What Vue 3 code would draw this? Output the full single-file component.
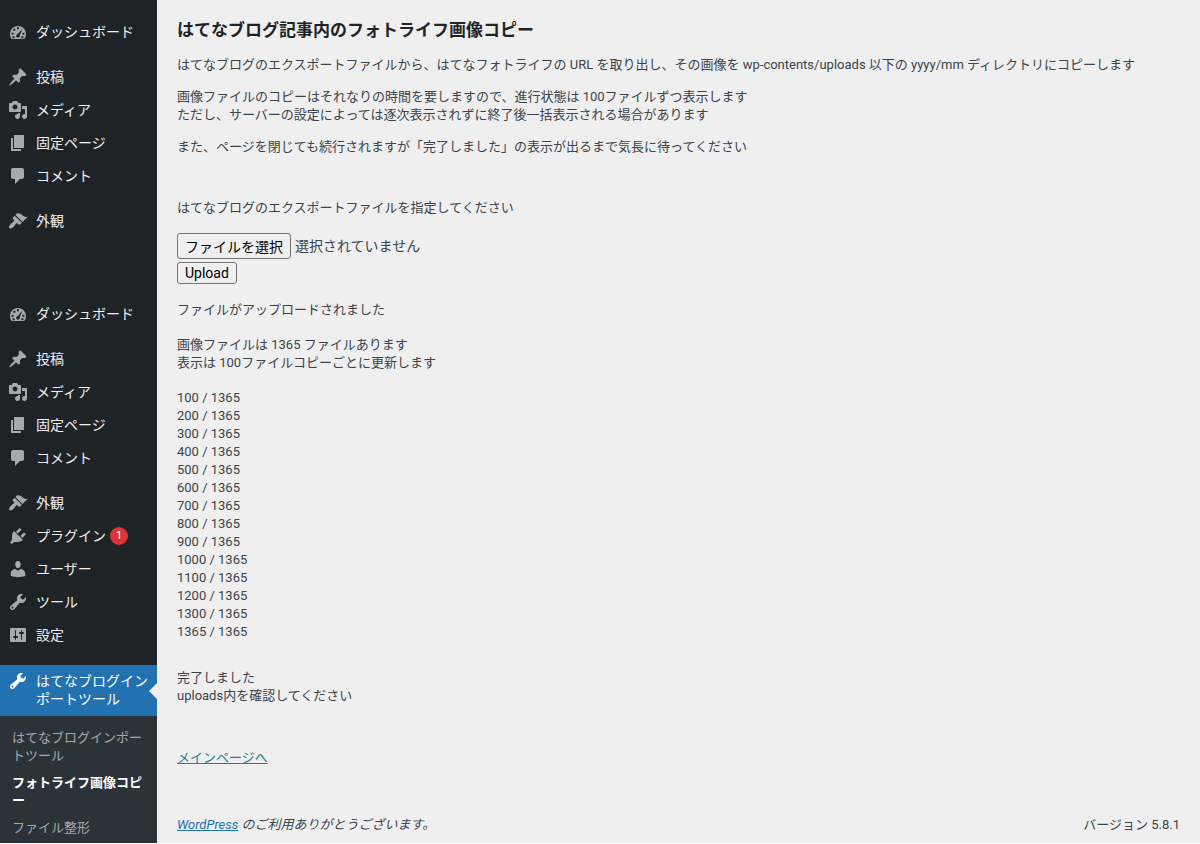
<template>
  <div class="admin">
    <aside class="sidebar">
      <nav
        v-for="(block, b) in menuBlocks"
        :key="b"
        class="menu-block"
        :aria-label="b === 0 ? 'メニュー' : '管理メニュー'"
      >
        <ul v-for="(group, g) in block" :key="g" class="menu-group">
          <li v-for="item in group" :key="item.label">
            <a href="#" class="menu-item">
              <svg class="icon" viewBox="0 0 20 20" aria-hidden="true">
                <path :d="icons[item.icon]" fill-rule="evenodd" />
              </svg>
              <span>{{ item.label }}</span>
              <span v-if="item.count" class="badge">{{ item.count }}</span>
            </a>
          </li>
        </ul>

        <!-- Current plugin -->
        <a v-if="b === 1" href="#" class="menu-item current">
          <svg class="icon" viewBox="0 0 20 20" aria-hidden="true">
            <path :d="icons.tools" fill-rule="evenodd" />
          </svg>
          <span>はてなブログインポートツール</span>
        </a>
      </nav>

      <ul class="submenu">
        <li v-for="sub in submenu" :key="sub">
          <a href="#" :class="{ selected: sub === page }">{{ sub }}</a>
        </li>
      </ul>
    </aside>

    <main class="content">
      <h1>はてなブログ記事内のフォトライフ画像コピー</h1>
      <p>はてなブログのエクスポートファイルから、はてなフォトライフの URL を取り出し、その画像を wp-contents/uploads 以下の yyyy/mm ディレクトリにコピーします</p>
      <p>
        画像ファイルのコピーはそれなりの時間を要しますので、進行状態は 100ファイルずつ表示します<br />
        ただし、サーバーの設定によっては逐次表示されずに終了後一括表示される場合があります
      </p>
      <p>また、ページを閉じても続行されますが「完了しました」の表示が出るまで気長に待ってください</p>

      <form class="upload" @submit.prevent>
        <p>はてなブログのエクスポートファイルを指定してください</p>
        <div class="file-row">
          <button type="button" class="file-button" @click="fileInput.click()">ファイルを選択</button>
          <label for="export-file">{{ fileName }}</label>
          <input id="export-file" ref="fileInput" type="file" hidden @change="handleFileChange" />
        </div>
        <button type="submit" class="submit-button">Upload</button>
      </form>

      <section class="progress">
        <p>ファイルがアップロードされました</p>
        <p>
          画像ファイルは {{ total }} ファイルあります<br />
          表示は 100ファイルコピーごとに更新します
        </p>
        <ul>
          <li v-for="n in steps" :key="n">{{ n }} / {{ total }}</li>
        </ul>
      </section>

      <p class="done">
        完了しました<br />
        uploads内を確認してください
      </p>

      <a href="#" class="main-link">メインページへ</a>

      <footer>
        <em><a href="#">WordPress</a> のご利用ありがとうございます。</em>
        <span>バージョン 5.8.1</span>
      </footer>
    </main>
  </div>
</template>

<script setup>
import { ref } from 'vue'

const total = 1365
const steps = [...Array.from({ length: 13 }, (_, i) => (i + 1) * 100), total]

const page = 'フォトライフ画像コピー'
const submenu = ['はてなブログインポートツール', page, 'ファイル整形']

const dashboard = { icon: 'dashboard', label: 'ダッシュボード' }
const contents = [
  { icon: 'post', label: '投稿' },
  { icon: 'media', label: 'メディア' },
  { icon: 'page', label: '固定ページ' },
  { icon: 'comment', label: 'コメント' }
]
const appearance = { icon: 'appearance', label: '外観' }

const menuBlocks = [
  [[dashboard], contents, [appearance]],
  [
    [dashboard],
    contents,
    [
      appearance,
      { icon: 'plugins', label: 'プラグイン', count: 1 },
      { icon: 'users', label: 'ユーザー' },
      { icon: 'tools', label: 'ツール' },
      { icon: 'settings', label: '設定' }
    ]
  ]
]

const fileInput = ref(null)
const fileName = ref('選択されていません')

const handleFileChange = (event) => {
  const file = event.target.files[0]
  fileName.value = file ? file.name : '選択されていません'
}

const icons = {
  dashboard:
    'M3.76 17h12.48A7.94 7.94 0 0 0 18 12c0-4.4-3.58-8-8-8s-8 3.6-8 8c0 1.9.66 3.62 1.76 5zM9 5.2h2v2H9zM5.3 6.8h2v2h-2zM3.6 10.8h2v2h-2zM14.4 10.8h2v2h-2zM4.6 14.2h2v2h-2zM13.4 14.2h2v2h-2zM14.6 6.6l-2.9 6.6c.5 1.2-.4 2.4-1.7 2.4-1.5 0-2.3-1.5-1.5-2.7.3-.5.8-.7 1.3-.8z',
  post: 'M10.44 3.02l1.82-1.82 6.36 6.35-1.83 1.82c-1.05-.68-2.48-.57-3.41.36l-.75.75c-.92.93-1.04 2.35-.35 3.41l-1.83 1.82-2.41-2.41-2.8 2.79c-.42.42-3.38 2.71-3.8 2.29s1.86-3.39 2.28-3.81l2.79-2.79L4.1 9.36l1.83-1.82c1.05.69 2.48.57 3.4-.36l.75-.75c.93-.92 1.05-2.35.36-3.41z',
  media:
    'M13 11V4c0-.55-.45-1-1-1h-1.67L9 1H5L3.67 3H2c-.55 0-1 .45-1 1v7c0 .55.45 1 1 1h10c.55 0 1-.45 1-1zM7 4.5c1.38 0 2.5 1.12 2.5 2.5S8.38 9.5 7 9.5 4.5 8.38 4.5 7 5.62 4.5 7 4.5zM14 6h5v10.5c0 1.38-1.12 2.5-2.5 2.5S14 17.88 14 16.5s1.12-2.5 2.5-2.5c.17 0 .34.02.5.05V9h-3V6zm-4 8.05V13h2v3.5c0 1.38-1.12 2.5-2.5 2.5S7 17.88 7 16.5 8.12 14 9.5 14c.17 0 .34.02.5.05z',
  page: 'M6 15V2h10v13H6zm-1 1h8v2H3V5h2v11z',
  comment: 'M5 2h9c1.1 0 2 .9 2 2v7c0 1.1-.9 2-2 2h-2l-5 5v-5H5c-1.1 0-2-.9-2-2V4c0-1.1.9-2 2-2z',
  appearance:
    'M14.48 11.06L7.41 3.99l1.5-1.5c.5-.56 2.3-.47 3.51.32 1.21.8 1.43 1.28 2.91 2.1 1.18.64 2.45 1.26 4.45.85zm-.71.71L6.7 4.7 4.93 6.47c-.39.39-.39 1.02 0 1.41l1.06 1.06c.39.39.39 1.03 0 1.42-.6.6-1.43 1.11-2.21 1.69-.35.26-.7.53-1.01.84C1.43 14.23.4 16.08 1.4 17.07c.99 1 2.84-.03 4.18-1.36.31-.31.58-.66.85-1.02.57-.78 1.08-1.61 1.69-2.21.39-.39 1.02-.39 1.41 0l1.06 1.06c.39.39 1.02.39 1.41 0z',
  plugins:
    'M13.11 4.36L9.87 7.6 8 5.73l3.24-3.24c.35-.34 1.05-.2 1.56.32.52.51.66 1.21.31 1.55zm-8 1.77l.91-1.12 9.01 9.01-1.19.84c-.71.71-2.63 1.16-3.82 1.16H6.14L4.9 17.26c-.59.59-1.54.59-2.12 0-.59-.58-.59-1.53 0-2.12l1.24-1.24v-3.88c0-1.13.4-3.19 1.09-3.89zm7.26 3.97l3.24-3.24c.34-.35 1.04-.21 1.55.31.52.51.66 1.21.31 1.55l-3.24 3.25z',
  users:
    'M10 9.25c-2.27 0-2.73-3.44-2.73-3.44C7 4.02 7.82 2 9.97 2c2.16 0 2.98 2.02 2.71 3.81 0 0-.41 3.44-2.68 3.44zm0 2.57L12.72 10c2.39 0 4.52 2.33 4.52 4.53v2.49s-3.65 1.13-7.24 1.13c-3.65 0-7.24-1.13-7.24-1.13v-2.49c0-2.25 1.94-4.48 4.47-4.48z',
  tools:
    'M16.68 9.77c-1.34 1.34-3.3 1.67-4.95.99l-5.41 6.52c-.99.99-2.59.99-3.58 0s-.99-2.59 0-3.57l6.52-5.42c-.68-1.65-.35-3.61.99-4.95 1.28-1.28 3.12-1.62 4.72-1.06l-2.89 2.89 2.82 2.82 2.86-2.87c.53 1.58.18 3.39-1.08 4.65zM3.81 16.21c.4.39 1.04.39 1.43 0 .4-.4.4-1.04 0-1.43-.39-.4-1.03-.4-1.43 0-.39.39-.39 1.03 0 1.43z',
  settings:
    'M18 16V4c0-.55-.45-1-1-1H3c-.55 0-1 .45-1 1v12c0 .55.45 1 1 1h14c.55 0 1-.45 1-1zM8 11h1c.55 0 1 .45 1 1s-.45 1-1 1H8v1.5c0 .28-.22.5-.5.5s-.5-.22-.5-.5V13H6c-.55 0-1-.45-1-1s.45-1 1-1h1V5.5c0-.28.22-.5.5-.5s.5.22.5.5V11zm5-2h-1c-.55 0-1-.45-1-1s.45-1 1-1h1V5.5c0-.28.22-.5.5-.5s.5.22.5.5V7h1c.55 0 1 .45 1 1s-.45 1-1 1h-1v5.5c0 .28-.22.5-.5.5s-.5-.22-.5-.5V9z'
}
</script>

<style>
body {
  background: #fff;
}
</style>

<style scoped>
.admin {
  display: flex;
  min-height: calc(100vh - 1px);
  background: #efefef;
  color: #3c434a;
  font-family: Roboto, "Noto Sans CJK JP", sans-serif;
  font-size: 13px;
  line-height: 18px;
}

ul {
  margin: 0;
  padding: 0;
  list-style: none;
}

/* Sidebar */
.sidebar {
  display: flex;
  flex-direction: column;
  flex: 0 0 157px;
  padding-top: 16px;
  background: #1d2327;
  line-break: anywhere;
}

.menu-block + .menu-block {
  margin-top: 60px;
}

.menu-group + .menu-group {
  margin-top: 12px;
}

.menu-item {
  display: flex;
  align-items: flex-start;
  gap: 8px;
  padding: 7px 8px 8px;
  color: #f0f0f1;
  font-size: 14px;
  text-decoration: none;
}

.icon {
  flex: none;
  width: 20px;
  height: 20px;
  margin: -1px 0;
  fill: #a7aaad;
}

.badge {
  width: 18px;
  height: 18px;
  margin-left: -4px;
  border-radius: 9px;
  background: #d63638;
  color: #fff;
  font-size: 11px;
  text-align: center;
}

.current {
  position: relative;
  margin-top: 13px;
  background: #2271b1;
  color: #fff;
}

.current .icon {
  fill: #fff;
}

/* Arrow pointing at the content */
.current::after {
  content: "";
  position: absolute;
  top: 50%;
  right: 0;
  border: 8px solid transparent;
  border-right-color: #efefef;
  border-left-width: 0;
  transform: translateY(-50%);
}

.submenu {
  flex: 1;
  padding-top: 8px;
  background: #2c3338;
}

.submenu li + li {
  margin-top: -1px;
}

.submenu a {
  display: block;
  padding: 5px 12px;
  color: #a7aaad;
  text-decoration: none;
}

.submenu .selected {
  color: #fff;
  font-weight: 600;
}

/* Content */
.content {
  display: flex;
  flex-direction: column;
  align-items: flex-start;
  flex: 1;
  min-width: 0;
  padding: 19px 20px 9px;
}

h1 {
  margin: 0 0 14px;
  color: #1d2327;
  font-size: 17px;
  font-weight: 600;
  line-height: 23px;
}

p {
  margin: 0 0 14px;
}

.upload {
  margin-top: 29px;
}

.upload p {
  margin-bottom: 16px;
}

.file-row {
  display: flex;
  align-items: center;
  gap: 4px;
  margin-bottom: 3px;
  font-size: 14px;
}

.upload button {
  padding: 0 7px;
  border: 1px solid #767676;
  border-radius: 3px;
  background: #efefef;
  color: #000;
  font-family: inherit;
  font-size: 14px;
}

.upload .file-button {
  height: 26px;
}

.upload .submit-button {
  display: block;
  height: 22px;
  line-height: 20px;
}

.progress {
  margin-top: 17px;
}

.progress p {
  margin-bottom: 17px;
}

.done {
  margin: 28px 0 44px;
}

a {
  color: #2271b1;
}

.main-link {
  color: #2a7a90;
}

footer {
  display: flex;
  justify-content: space-between;
  align-self: stretch;
  margin-top: auto;
}
</style>
